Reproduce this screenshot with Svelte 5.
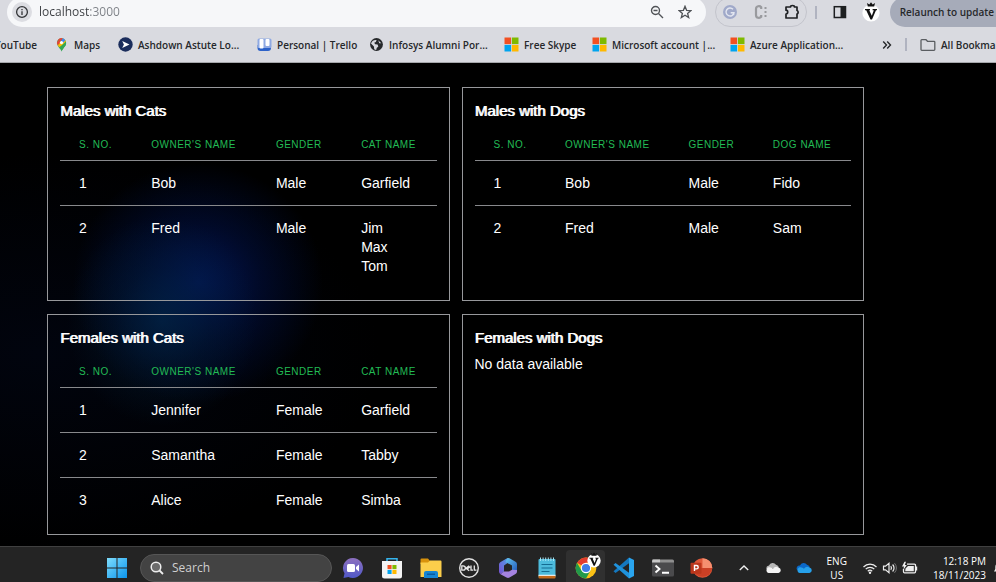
<script>
  const bookmarks = [
    { icon: 'maps', label: 'Maps', width: 27 },
    { icon: 'ashdown', label: 'Ashdown Astute Lo...', width: 102 },
    { icon: 'trello', label: 'Personal | Trello', width: 75 },
    { icon: 'globe', label: 'Infosys Alumni Por...', width: 98 },
    { icon: 'ms', label: 'Free Skype', width: 51 },
    { icon: 'ms', label: 'Microsoft account |...', width: 101 },
    { icon: 'ms', label: 'Azure Application...', width: 94 },
  ];

  const cards = [
    {
      title: 'Males with Cats',
      pet: 'Cat name',
      rows: [
        ['Bob', 'Male', ['Garfield']],
        ['Fred', 'Male', ['Jim', 'Max', 'Tom']],
      ],
    },
    {
      title: 'Males with Dogs',
      pet: 'Dog name',
      rows: [
        ['Bob', 'Male', ['Fido']],
        ['Fred', 'Male', ['Sam']],
      ],
    },
    {
      title: 'Females with Cats',
      pet: 'Cat name',
      rows: [
        ['Jennifer', 'Female', ['Garfield']],
        ['Samantha', 'Female', ['Tabby']],
        ['Alice', 'Female', ['Simba']],
      ],
    },
    { title: 'Females with Dogs', pet: 'Dog name', rows: [] },
  ];

  const apps = [
    { id: 'chat', name: 'Chat' },
    { id: 'store', name: 'Microsoft Store' },
    { id: 'explorer', name: 'File Explorer', running: true },
    { id: 'dell', name: 'Dell' },
    { id: 'm365', name: 'Microsoft 365' },
    { id: 'notepad', name: 'Notepad', running: true },
    { id: 'chrome', name: 'Google Chrome', active: true },
    { id: 'vscode', name: 'Visual Studio Code', running: true },
    { id: 'terminal', name: 'Terminal', running: true },
    { id: 'ppt', name: 'PowerPoint', running: true },
  ];
</script>

{#snippet bookmarkIcon(name)}
  <svg width="15" height="15" viewBox="0 0 15 15" aria-hidden="true">
    {#if name === 'maps'}
      <path d="M7.5 14.4C7 12 3 9.500 3 5.700A4.500 4.500 0 0 1 12 5.700C12 9.500 8 12 7.500 14.400Z" fill="#34a853" />
      <path d="M3.600 7.800 9.800 1.800A4.500 4.500 0 0 1 11.900 5L5.200 10.200Z" fill="#fbbc04" />
      <path d="M7.500 9.500 11.800 4.400A5 5 0 0 1 10.200 10L7.500 14.400Z" fill="#34a853" />
      <path d="M3.900 3 6.500 5.200 3.800 8.300A5 5 0 0 1 3.900 3Z" fill="#ea4335" />
      <path d="M3.900 3A4.600 4.600 0 0 1 8.900 1.300L6.200 5Z" fill="#ea4335" />
      <path d="M8.900 1.300A4.500 4.500 0 0 1 11.300 3.200L8.800 6 6.800 4.300Z" fill="#4285f4" />
      <circle cx="7.500" cy="5.600" r="1.600" fill="#fff" />
    {:else if name === 'ashdown'}
      <circle cx="7.500" cy="7.500" r="7.200" fill="#1b2d5c" />
      <path d="M4.200 3.900 11.500 7.500 4.200 11.100 5.900 7.500Z" fill="#fff" />
    {:else if name === 'trello'}
      <path d="M.5 8h13.500v3a3 3 0 0 1-3 3H3.500a3 3 0 0 1-3-3Z" fill="#2d62c9" />
      <rect x=".5" y="1.500" width="14" height="9.500" rx="1.500" fill="#8fa9e2" />
      <rect x="2.500" y="2" width="4" height="9.500" rx="1" fill="#fff" />
      <rect x="8.500" y="2" width="4" height="7" rx="1" fill="#fff" />
    {:else if name === 'globe'}
      <circle cx="7.500" cy="7.500" r="6.400" fill="#26282b" />
      <path d="M2 6.500C3 4 5 2.800 7.600 3.200L6.800 5 5.200 5.700 6.200 7.300 8.600 7.600 9.300 9.500 7.700 11 7.200 12.900C4 12.600 5.700 10.500 4.700 9.200ZM9.200 3.300 12.300 6.300 10.300 6.300Z" fill="#d8d9df" />
    {:else}
      <path d="M.5.5h6.600v6.600H.5z" fill="#f25022" />
      <path d="M7.900.5h6.600v6.600H7.900z" fill="#7fba00" />
      <path d="M.5 7.900h6.600v6.600H.5z" fill="#00a4ef" />
      <path d="M7.900 7.900h6.600v6.600H7.900z" fill="#ffb900" />
    {/if}
  </svg>
{/snippet}

{#snippet appIcon(id)}
  <svg width="24" height="24" viewBox="0 0 24 24" aria-hidden="true">
    {#if id === 'chat'}
      <defs><linearGradient id="chatFill" x1="0" y1="0" x2="0" y2="1"><stop offset="0" stop-color="#8d70be" /><stop offset="1" stop-color="#5058c8" /></linearGradient></defs>
      <path d="M12 2a10 10 0 1 1-4.600 18.900L2.500 22l1-4.800A10 10 0 0 1 12 2Z" fill="url(#chatFill)" />
      <rect x="6" y="8" width="8" height="8" rx="1.500" fill="#fff" />
      <path d="M15 11l3-2.500v7L15 13Z" fill="#fff" />
    {:else if id === 'store'}
      <path d="M7 6V2.800h10V6" fill="none" stroke="#35b5ee" stroke-width="1.500" />
      <path d="M2 5h20v15a2.500 2.500 0 0 1-2.500 2.500h-15A2.500 2.500 0 0 1 2 20Z" fill="#f3f3f3" />
      <path d="M7.500 9H11.600v4.100H7.500z" fill="#f25022" />
      <path d="M12.400 9h4.100v4.100h-4.100z" fill="#7fba00" />
      <path d="M7.500 13.900H11.600V18H7.500z" fill="#00a4ef" />
      <path d="M12.400 13.900h4.100V18h-4.100z" fill="#ffb900" />
    {:else if id === 'explorer'}
      <path d="M1.500 3.500a1 1 0 0 1 1-1H9L11 5v3H1.500Z" fill="#d8920c" />
      <path d="M1.500 6.500H9L11 4.500h10.500a1 1 0 0 1 1 1V21h-21Z" fill="#fbce4b" />
      <path d="M5 22v-5a2 2 0 0 1 2-2h10a2 2 0 0 1 2 2v5Z" fill="#1685d3" />
      <path d="M8 17.500h8v1.500H8z" fill="#0a5ba0" />
    {:else if id === 'dell'}
      <circle cx="12" cy="12" r="9.300" fill="none" stroke="#e2e2e2" stroke-width="1.400" />
      <path d="M4.800 9.800v4.400h1.300c3 0 3-4.400 0-4.400ZM9 12.200l3.200-2.500M9 12.200l3.200 2.500M10.100 13.100l3-2.400M14 9.500v4.700h2M17.300 9.500v4.700h2.200" fill="none" stroke="#e8e8e8" stroke-width="1.300" />
    {:else if id === 'm365'}
      <defs>
        <linearGradient id="mA" x1="0" y1="1" x2="1" y2="0"><stop offset="0" stop-color="#7a4fd0" /><stop offset="1" stop-color="#4da3e8" /></linearGradient>
        <linearGradient id="mB" x1="0" y1="0" x2="1" y2="1"><stop offset="0" stop-color="#65c8f0" /><stop offset="1" stop-color="#2358b8" /></linearGradient>
      </defs>
      <path d="M11.500 2 4.600 6a3 3 0 0 0-1.600 2.600v7a3 3 0 0 0 1.500 2.600L8 15.800V9.500l5-3.500Z" fill="url(#mA)" />
      <path d="M11.500 2a3 3 0 0 1 2 .2l6 3.500A3 3 0 0 1 21 8.300v6.500l-5 1V9.500L9.500 6Z" fill="url(#mB)" />
      <path d="M21 14v1.500a3 3 0 0 1-1.500 2.600l-6 3.500a3 3 0 0 1-3 0L4.500 18.200 8 15.500h5l3-1.700Z" fill="#a583e0" />
    {:else if id === 'notepad'}
      <rect x="3.500" y="3" width="17" height="18.500" rx="1" fill="#4dbbdc" />
      <path d="M3.500 19.500h17v2a1 1 0 0 1-1 1h-15a1 1 0 0 1-1-1Z" fill="#c46a1c" />
      <path d="M3.500 18.800h17v1h-17z" fill="#fff" />
      <path d="M5.500 1.500v3.500M8.100 1.500v3.500M10.700 1.500v3.500M13.300 1.500v3.500M15.900 1.500v3.500M18.500 1.500v3.500" stroke="#a5e4f4" />
      <path d="M6.500 8.500h11M6.500 12h11M6.500 15.500h8" stroke="#146c92" stroke-width="1.200" />
    {:else if id === 'chrome'}
      <circle cx="12" cy="12" r="10.400" fill="#fbc116" />
      <path d="M12 12 3 6.800A10.400 10.400 0 0 1 21 6.800H12Z" fill="#e33b2e" />
      <path d="M3 6.800A10.400 10.400 0 0 0 12 22.400L16.500 14.600 12 12 7.500 14.600Z" fill="#229a4b" />
      <circle cx="12" cy="12" r="5.200" fill="#fff" />
      <circle cx="12" cy="12" r="4.100" fill="#3e7de8" />
    {:else if id === 'vscode'}
      <path d="M17 1.500 22 4v16l-5 2.500Z" fill="#2aa5ef" />
      <path d="M17 1.500 1.500 15.300 3.500 17 17 7.300Z" fill="#1478c0" />
      <path d="M17 22.500 1.500 8.700 3.500 7 17 16.700Z" fill="#1f92dc" />
    {:else if id === 'terminal'}
      <path d="M1 5a1.500 1.500 0 0 1 1.500-1.500h19A1.500 1.500 0 0 1 23 5v3H1Z" fill="#8f8f8f" />
      <path d="M1.500 3.500h7.500V7H1z" fill="#c8c8c8" />
      <path d="M1 6.500h22V19a1.500 1.500 0 0 1-1.500 1.500h-19A1.500 1.500 0 0 1 1 19Z" fill="#4a4a4c" />
      <path d="M4.500 9.500 8.500 13l-4 3.500M11 16.700h7" fill="none" stroke="#fff" stroke-width="1.900" />
    {:else}
      <circle cx="12.500" cy="12" r="9.800" fill="#e0593a" />
      <path d="M12.500 2.200A9.800 9.800 0 0 1 22.300 12H12.500Z" fill="#f58f70" />
      <path d="M2.800 12h19.500A9.800 9.800 0 0 1 2.800 12Z" fill="#cb4025" />
      <rect x=".5" y="6.800" width="11" height="11" rx="1" fill="#bb371c" />
      <path d="M4.500 15V9.500h2a1.700 1.700 0 0 1 0 3.400h-2" fill="none" stroke="#fff" stroke-width="1.400" />
    {/if}
  </svg>
{/snippet}

{#snippet crest()}
  <svg width="18" height="20" viewBox="0 0 18 20" aria-hidden="true">
    <circle cx="9" cy="11" r="8.600" fill="#fff" />
    <path d="M5.800 4.500 5 1l2.300 1.500L9 .3l1.700 2.200L13 1l-.8 3.500ZM3 7h5v1.200H7.200l2.600 5.500 2-5.500h-1.200V7H15v1.200h-1L10 17.500H8.500L4.200 8.200H3Z" fill="#111" />
  </svg>
{/snippet}

<div class="screen">
  <header>
    <div class="toolbar">
      <div class="omnibox">
        <button class="info" aria-label="View site information">
          <svg width="14" height="14" viewBox="0 0 14 14"><circle cx="7" cy="7" r="5.400" fill="none" stroke="#333538" stroke-width="1.300" /><path d="M7 6.300v3.700M7 4v1.300" stroke="#333538" stroke-width="1.300" /></svg>
        </button>
        <input class="address" aria-label="Address" value="localhost:3000" />
        <button aria-label="Zoom out">
          <svg width="14" height="14" viewBox="0 0 14 14"><circle cx="5.500" cy="5.500" r="4" fill="none" stroke="#505357" stroke-width="1.400" /><path d="M3.500 5.500h4M8.500 8.500l4.500 4.500" stroke="#505357" stroke-width="1.400" /></svg>
        </button>
        <button aria-label="Bookmark this tab">
          <svg width="14" height="14" viewBox="0 0 14 14"><path d="M7 1.300 8.600 5.300 12.900 5.600 9.600 8.400 10.700 12.600 7 10.300 3.300 12.600 4.400 8.400 1.100 5.600 5.400 5.300Z" fill="none" stroke="#505357" stroke-width="1.300" /></svg>
        </button>
      </div>
      <div class="extensions">
        <button aria-label="Grammarly">
          <svg width="16" height="16" viewBox="0 0 16 16"><circle cx="8" cy="8" r="7" fill="#a0a9c9" /><path d="M11 5.300A4 4 0 1 0 12 8.700H8.700M12 8.700 11.500 11" fill="none" stroke="#e3e6f0" stroke-width="1.400" /></svg>
        </button>
        <button aria-label="Developer extension">
          <svg width="16" height="16" viewBox="0 0 16 16"><path d="M8.200 5V3.200C7 1.700 3 1.500 3 5v6c0 3.500 4 3.300 5.200 1.800V11" fill="none" stroke="#999a9e" stroke-width="2.200" /><path d="M11.500 3h2v2h-2zM11.500 7h2v2h-2zM11.500 11h2v2h-2z" fill="#999a9e" /></svg>
        </button>
        <button aria-label="Extensions">
          <svg width="16" height="16" viewBox="0 0 16 16"><path d="M2 3h4.500a2 1.500 0 0 1 4 0H13v3.500a1.500 1.800 0 0 1 0 3.500v4H2v-4a1.700 1.900 0 0 0 0-3.800Z" fill="none" stroke="#202225" stroke-width="1.700" stroke-linejoin="round" /></svg>
        </button>
      </div>
      <span class="bar"></span>
      <button class="side" aria-label="Side panel">
        <svg width="14" height="14" viewBox="0 0 14 14"><rect x="1.300" y="1.700" width="11.200" height="10.800" fill="none" stroke="#1d1f21" stroke-width="1.500" /><path d="M7.500 1.500H13v11.500H7.500z" fill="#1d1f21" /></svg>
      </button>
      <button class="profile" aria-label="Profile">{@render crest()}</button>
      <button class="relaunch">Relaunch to update</button>
    </div>
    <nav class="bookmarks" aria-label="Bookmarks">
      <a class="first" href="#youtube">YouTube</a>
      {#each bookmarks as b}
        <a href="#bookmark">{@render bookmarkIcon(b.icon)}<span style="width: {b.width}px">{b.label}</span></a>
      {/each}
      <button class="more" aria-label="More bookmarks">
        <svg width="10" height="10" viewBox="0 0 10 10"><path d="M1.200 1.500 4.500 5 1.200 8.500M5.200 1.500 8.500 5 5.200 8.500" fill="none" stroke="#26282b" stroke-width="1.400" /></svg>
      </button>
      <span class="bar"></span>
      <a class="all" href="#all">
        <svg width="16" height="14" viewBox="0 0 16 14"><path d="M1 2.500A.8.8 0 0 1 1.800 1.700H6L7.500 3.300h6.500a.8.800 0 0 1 .8.800V11.500a.8.800 0 0 1-.8.800H1.800A.8.800 0 0 1 1 11.500Z" fill="none" stroke="#5a5d61" stroke-width="1.300" /></svg>
        <span>All Bookmarks</span>
      </a>
    </nav>
  </header>

  <main>
    {#each cards as card}
      <section>
        <h2>{card.title}</h2>
        {#if card.rows.length}
          <table>
            <thead>
              <tr><th scope="col">S. No.</th><th scope="col">Owner's name</th><th scope="col">Gender</th><th scope="col">{card.pet}</th></tr>
            </thead>
            <tbody>
              {#each card.rows as [owner, gender, pets], i}
                <tr>
                  <td>{i + 1}</td>
                  <td>{owner}</td>
                  <td>{gender}</td>
                  <td>{#each pets as pet}<div>{pet}</div>{/each}</td>
                </tr>
              {/each}
            </tbody>
          </table>
        {:else}
          <p>No data available</p>
        {/if}
      </section>
    {/each}
  </main>

  <footer>
    <div class="taskbar">
      <button class="start" aria-label="Start">
        <svg width="22" height="22" viewBox="0 0 22 22">
          <defs><linearGradient id="win" x1="0" y1="0" x2="1" y2="1"><stop offset="0" stop-color="#7fdcfb" /><stop offset="1" stop-color="#0a95ee" /></linearGradient></defs>
          <path d="M1 1h9.500v9.500H1zM11.500 1H21v9.500h-9.500zM1 11.500h9.500V21H1zM11.500 11.500H21V21h-9.500z" fill="url(#win)" />
        </svg>
      </button>
      <label class="search">
        <svg width="14" height="14" viewBox="0 0 14 14" aria-hidden="true"><circle cx="6" cy="6" r="4.800" fill="#6c6c6c" stroke="#eee" stroke-width="1.500" /><path d="M9.500 9.500 13 13" stroke="#eee" stroke-width="1.800" /></svg>
        <input type="text" aria-label="Search" placeholder="Search" />
      </label>
      <nav class="apps" aria-label="Apps">
        {#each apps as app}
          <button class:running={app.running} class:active={app.active} aria-label={app.name}>
            {@render appIcon(app.id)}
            {#if app.active}<span class="badge">{@render crest()}</span>{/if}
          </button>
        {/each}
      </nav>
      <div class="tray">
        <button aria-label="Show hidden icons"><svg width="12" height="12" viewBox="0 0 12 12"><path d="M1.800 8 6 4l4.200 4" fill="none" stroke="#f0f0f0" stroke-width="1.400" /></svg></button>
        <button aria-label="OneDrive personal"><svg width="16" height="12" viewBox="0 0 16 12"><path d="M1.500 7A3 3 0 0 1 4 3.500a4 4 0 0 1 7-.8 4 4 0 0 1 3 2.800Z" fill="#b8b8b8" /><path d="M3.500 11A3 3 0 0 1 3 5.500C5 4.700 7 6 8 6.500A4.500 4.500 0 0 1 13.500 5.500a2.800 2.800 0 0 1 0 5.500Z" fill="#f4f4f4" /></svg></button>
        <button aria-label="OneDrive work"><svg width="16" height="12" viewBox="0 0 16 12"><path d="M1 8A3 3 0 0 1 4 3.500a4 4 0 0 1 7-.8 4 4 0 0 1 3 2.800Z" fill="#0b68c8" /><path d="M3.500 11A3 3 0 0 1 3 5.500C5 4.700 7 6 8 6.500A4.500 4.500 0 0 1 13.500 5.500a2.800 2.800 0 0 1 0 5.500Z" fill="#26a0ea" /></svg></button>
        <button class="lang"><span>ENG</span><span>US</span></button>
        <button class="status" aria-label="Network, sound and battery">
          <svg width="16" height="14" viewBox="0 0 16 14"><path d="M1.500 6a9 9 0 0 1 13 0M3.700 8.200a6 6 0 0 1 8.600 0M5.800 10.200a3.200 3.200 0 0 1 4.400 0" fill="none" stroke="#eee" stroke-width="1.200" /><circle cx="8" cy="11.800" r="1.200" fill="#eee" /></svg>
          <svg width="15" height="14" viewBox="0 0 15 14"><path d="M1.500 5.200h2L7 2.300v9.400L3.500 8.800h-2ZM8.800 5.200a3 3 0 0 1 0 3.600M10.600 3.500a5 5 0 0 1 0 7" fill="none" stroke="#eee" stroke-width="1.200" /><path d="M12.500 2.200a7 7 0 0 1 0 9.600" fill="none" stroke="#777" /></svg>
          <svg width="17" height="14" viewBox="0 0 17 14"><path d="M6 3.200h7.500a1 1 0 0 1 1 1v6.600a1 1 0 0 1-1 1H3.500a1 1 0 0 1-1-1V8" fill="none" stroke="#eee" stroke-width="1.300" /><path d="M4.500 7.500 7 5h5.800v5.200H4.200ZM14.800 5.500h1.400v4h-1.400zM3.500.8 1 5.500h2L2.300 9 5.800 4h-2L5 .8Z" fill="#eee" /></svg>
        </button>
        <button class="clock"><span>12:18 PM</span><span>18/11/2023</span></button>
        <button class="bell" aria-label="Notifications"><svg width="12" height="12" viewBox="0 0 12 12"><path d="M1 9.500 2.300 7V5a3.700 3.700 0 0 1 7.400 0v2L11 9.500Z" fill="#eee" /></svg></button>
      </div>
    </div>
  </footer>
</div>

<style>
  :global(body) {
    margin: 0;
    background: #000;
  }
  .screen {
    display: flex;
    flex-direction: column;
    min-height: 100vh;
    overflow: hidden;
    font-family: "Liberation Sans", Arial, sans-serif;
    color: #fff;
  }
  button,
  input {
    border: 0;
    padding: 0;
    margin: 0;
    background: none;
    font: inherit;
    color: inherit;
  }
  button {
    display: flex;
    align-items: center;
    justify-content: center;
    flex: none;
  }
  svg {
    display: block;
    flex: none;
  }

  header {
    background: #d9dae0;
    color: #26282b;
    border-bottom: 1px solid #a6a7ab;
    font: 600 10px/14px "Open Sans", "Noto Sans", sans-serif;
    overflow: hidden;
  }
  .toolbar {
    display: flex;
    align-items: center;
    height: 30px;
    margin-top: -3px;
    padding-left: 7px;
  }
  .omnibox {
    display: flex;
    align-items: center;
    flex: 1;
    min-width: 0;
    height: 30px;
    gap: 14px;
    padding: 0 14px 0 5px;
    box-sizing: border-box;
    border-radius: 15px;
    background: #f6f7f9;
  }
  .info {
    width: 20px;
    height: 20px;
    border-radius: 10px;
    background: #dcdde2;
  }
  .address {
    flex: 1;
    min-width: 0;
    margin-left: -7px;
    font-size: 12px;
    font-weight: 400;
    background: linear-gradient(90deg, #3a3d41 50px, #7b7f85 50px);
    background-clip: text;
    -webkit-background-clip: text;
    color: transparent;
  }
  .extensions {
    display: flex;
    align-items: center;
    justify-content: space-between;
    width: 92px;
    height: 30px;
    margin: 0 8px 0 9px;
    padding: 0 6px;
    box-sizing: border-box;
    border: 1px solid #c3c4cc;
    border-radius: 15px;
  }
  .bar {
    width: 2px;
    height: 13px;
    background: #b0b3c0;
  }
  .side {
    margin: 0 15px 0 16px;
  }
  .profile {
    margin-right: 10px;
  }
  .relaunch {
    height: 30px;
    padding: 0 12px 0 10px;
    margin-right: -10px;
    border-radius: 15px 0 0 15px;
    background: #a6abb9;
    white-space: nowrap;
  }
  .bookmarks {
    display: flex;
    align-items: center;
    gap: 17px;
    height: 35px;
    white-space: nowrap;
  }
  .bookmarks a {
    display: flex;
    align-items: center;
    gap: 5px;
    flex: none;
    color: inherit;
    text-decoration: none;
  }
  .bookmarks .first {
    justify-content: flex-end;
    width: 37px;
  }
  .more {
    margin: 0 -4px 0 auto;
  }
  .bookmarks .all {
    width: 76px;
    margin-left: -4px;
  }

  main {
    flex: 1;
    display: grid;
    grid-template-columns: 1fr 1fr;
    align-content: start;
    gap: 13px 12px;
    padding: 24px 132px 11px 47px;
    background:
      radial-gradient(ellipse 95px 105px at 162px 258px, rgba(2, 40, 72, 0.65), rgba(2, 32, 58, 0.35) 50%, transparent),
      radial-gradient(ellipse 125px 120px at 198px 220px, rgba(2, 22, 86, 0.95), rgba(1, 14, 58, 0.65) 50%, transparent),
      radial-gradient(ellipse 340px 200px at 40px 290px, rgba(2, 8, 28, 0.5), transparent),
      #000;
  }
  section {
    border: 1px solid #97989b;
    padding: 12px;
  }
  h2 {
    margin: 0 0 6px;
    font-size: 15px;
    line-height: 22px;
    font-weight: 400;
    text-shadow: 1px 0 #fff;
  }
  p {
    margin: 0;
    font-size: 14px;
    line-height: 19px;
  }
  table {
    width: 100%;
    border-collapse: collapse;
    font-size: 14px;
    line-height: 19px;
  }
  th,
  td {
    padding: 13px 0 12px 19px;
    text-align: left;
    vertical-align: top;
  }
  tr {
    border-bottom: 1px solid #88898c;
  }
  tbody tr:last-child {
    border-bottom: 0;
  }
  th {
    padding: 10px 19px 8px;
    font-size: 10px;
    line-height: 14px;
    font-weight: 400;
    letter-spacing: 0.05em;
    text-transform: uppercase;
    white-space: nowrap;
    color: #22bb55;
  }

  footer {
    height: 36px;
    overflow: hidden;
    background: #242424;
    border-top: 1px solid #404040;
    box-sizing: border-box;
    font: 10px/14px "Open Sans", "Noto Sans", sans-serif;
  }
  .taskbar {
    display: flex;
    align-items: center;
    height: 41px;
    padding-left: 106px;
  }
  .search {
    display: flex;
    align-items: center;
    gap: 8px;
    width: 192px;
    height: 28px;
    margin: 0 2px 0 12px;
    padding: 0 9px;
    box-sizing: border-box;
    border-radius: 14px;
    border: 1px solid #565656;
    background: #434343;
  }
  .search input {
    flex: 1;
    min-width: 0;
    font-size: 12px;
  }
  .search input::placeholder {
    color: #d0d0d0;
    opacity: 1;
  }
  .apps {
    display: flex;
    width: 387px;
  }
  .apps button {
    position: relative;
    flex: 1;
    height: 36px;
  }
  .apps .active {
    background: #303030;
    border-radius: 4px;
  }
  .running::after,
  .active::after {
    content: "";
    position: absolute;
    bottom: 0;
    width: 6px;
    height: 4px;
    border-radius: 2px;
    background: #a0a0a0;
  }
  .active::after {
    width: 14px;
    background: #60c4f0;
  }
  .badge {
    position: absolute;
    top: 2px;
    right: 4px;
  }
  .badge svg {
    width: 14px;
    height: 16px;
  }
  .tray {
    display: flex;
    align-items: center;
    gap: 15px;
    margin-left: auto;
    margin-right: -9px;
  }
  .lang,
  .clock {
    flex-direction: column;
    align-items: center;
  }
  .clock {
    align-items: flex-end;
  }
  .bell {
    margin-left: -8px;
  }
  .status {
    gap: 4px;
  }
</style>
